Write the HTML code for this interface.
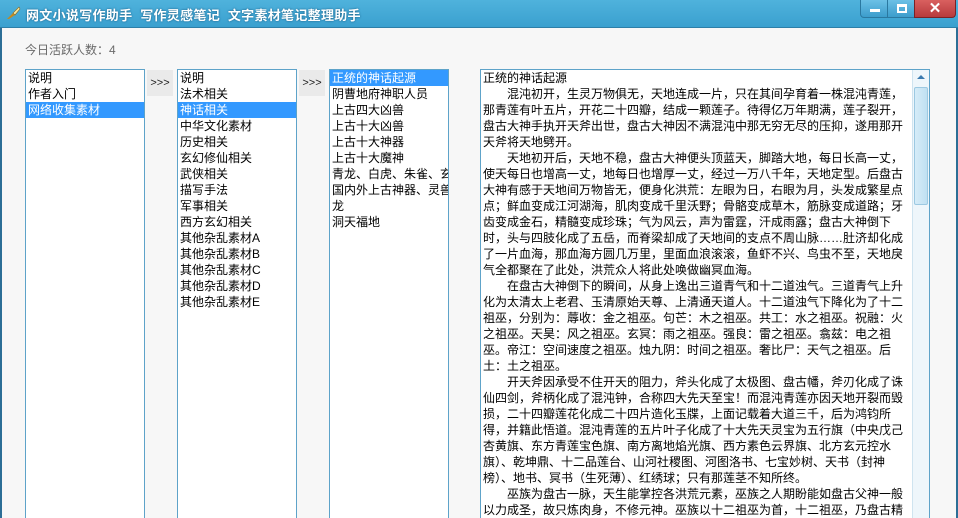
<!DOCTYPE html>
<html style="width:958px;height:518px;overflow:hidden"><head><meta charset="utf-8"><style>
*{margin:0;padding:0;box-sizing:border-box}
body{width:958px;height:518px;overflow:hidden;position:relative;background:#f7f7f7;font-family:"Liberation Sans","Noto Sans CJK SC",sans-serif;font-size:12px;color:#000}
#tb{position:absolute;left:0;top:0;width:958px;height:28px;background:linear-gradient(#4fb2dc,#3aa0cf);border-bottom:1px solid #2d7fa8}
#tb .t{position:absolute;left:26px;top:5px;color:#fff;font-size:13px;font-weight:bold;letter-spacing:0.3px;text-shadow:0 0 2px #1a5a80}
.ico{position:absolute;left:6px;top:6px;width:15px;height:14px}
.btn{position:absolute;top:0;height:18px;border:1px solid #2a78a0;border-top:none}
#bl{position:absolute;left:0;top:28px;width:2px;height:490px;background:#2c6e96}
#br{position:absolute;right:0;top:28px;width:2px;height:490px;background:#2c6e96}
.lb{position:absolute;top:69px;height:460px;background:#fff;border:1px solid #5ea3c9;line-height:16px;padding-top:0}
.lb div{padding-left:2px;white-space:nowrap;overflow:hidden;height:16px}
.sel{background:#3399ff;color:#fff}
.ar{position:absolute;top:70px;width:26px;height:26px;background:#eaeaea;font-size:11px;line-height:26px;text-align:center;color:#222}
#tx{position:absolute;left:480px;top:69px;width:450px;height:460px;background:#fff;border:1px solid #5ea3c9;line-height:16px;padding:0 0 0 2px}
#tx div{white-space:nowrap;height:16px}
#sb{position:absolute;left:912px;top:70px;width:17px;height:448px;background:#eef6fb;border-left:1px solid #cfe4f0}
#sb .th{position:absolute;left:1px;top:17px;width:14px;height:118px;background:linear-gradient(90deg,#d6ecf8,#bfe0f2);border:1px solid #9cc9e2;border-radius:2px}
</style></head><body>
<div id="tb">
<svg class="ico" viewBox="0 0 15 14"><path d="M1 13 L7 7 L9 9 L3 13 Z" fill="#c08a20"/><path d="M7 7 L13 1 L14 3 L9 9Z" fill="#f5e6a0" stroke="#8a6a20" stroke-width="0.6"/></svg>
<div class="t">网文小说写作助手&nbsp; 写作灵感笔记&nbsp; 文字素材笔记整理助手</div>
<div class="btn" style="left:860px;width:28px;background:linear-gradient(#6bc0e6,#3c9dcc);border-radius:0 0 0 4px"><div style="position:absolute;left:9px;top:9px;width:10px;height:3px;background:#fff"></div></div>
<div class="btn" style="left:887px;width:28px;background:linear-gradient(#6bc0e6,#3c9dcc)"><div style="position:absolute;left:9px;top:4px;width:10px;height:9px;border:2px solid #fff;border-top-width:3px"></div></div>
<div class="btn" style="left:914px;width:42px;background:linear-gradient(#d9605f,#b73a3c);border-color:#7a2226;border-radius:0 0 4px 0;color:#fff;font-weight:bold;font-size:15px;text-align:center;line-height:17px">✕</div>
</div>
<div id="bl"></div><div id="br"></div>
<div style="position:absolute;left:25px;top:41px;color:#6a6a6a;font-size:12px">今日活跃人数：4</div>
<div class="lb" style="left:25px;width:120px"><div>说明</div><div>作者入门</div><div class="sel">网络收集素材</div></div>
<div class="ar" style="left:147px">&gt;&gt;&gt;</div>
<div class="lb" style="left:177px;width:120px"><div>说明</div><div>法术相关</div><div class="sel">神话相关</div><div>中华文化素材</div><div>历史相关</div><div>玄幻修仙相关</div><div>武侠相关</div><div>描写手法</div><div>军事相关</div><div>西方玄幻相关</div><div>其他杂乱素材A</div><div>其他杂乱素材B</div><div>其他杂乱素材C</div><div>其他杂乱素材D</div><div>其他杂乱素材E</div></div>
<div class="ar" style="left:299px">&gt;&gt;&gt;</div>
<div class="lb" style="left:329px;width:120px"><div class="sel">正统的神话起源</div><div>阴曹地府神职人员</div><div>上古四大凶兽</div><div>上古十大凶兽</div><div>上古十大神器</div><div>上古十大魔神</div><div>青龙、白虎、朱雀、玄武</div><div>国内外上古神器、灵兽</div><div>龙</div><div>洞天福地</div></div>
<div id="tx">
<div>正统的神话起源</div>
<div>　　混沌初开，生灵万物俱无，天地连成一片，只在其间孕育着一株混沌青莲，</div>
<div>那青莲有叶五片，开花二十四瓣，结成一颗莲子。待得亿万年期满，莲子裂开，</div>
<div>盘古大神手执开天斧出世，盘古大神因不满混沌中那无穷无尽的压抑，遂用那开</div>
<div>天斧将天地劈开。</div>
<div>　　天地初开后，天地不稳，盘古大神便头顶蓝天，脚踏大地，每日长高一丈，</div>
<div>使天每日也增高一丈，地每日也增厚一丈，经过一万八千年，天地定型。后盘古</div>
<div>大神有感于天地间万物皆无，便身化洪荒：左眼为日，右眼为月，头发成繁星点</div>
<div>点；鲜血变成江河湖海，肌肉变成千里沃野；骨骼变成草木，筋脉变成道路；牙</div>
<div>齿变成金石，精髓变成珍珠；气为风云，声为雷霆，汗成雨露；盘古大神倒下</div>
<div>时，头与四肢化成了五岳，而脊梁却成了天地间的支点不周山脉……肚济却化成</div>
<div>了一片血海，那血海方圆几万里，里面血浪滚滚，鱼虾不兴、鸟虫不至，天地戾</div>
<div>气全都聚在了此处，洪荒众人将此处唤做幽冥血海。</div>
<div>　　在盘古大神倒下的瞬间，从身上逸出三道青气和十二道浊气。三道青气上升</div>
<div>化为太清太上老君、玉清原始天尊、上清通天道人。十二道浊气下降化为了十二</div>
<div>祖巫，分别为：蓐收：金之祖巫。句芒：木之祖巫。共工：水之祖巫。祝融：火</div>
<div>之祖巫。天昊：风之祖巫。玄冥：雨之祖巫。强良：雷之祖巫。翕兹：电之祖</div>
<div>巫。帝江：空间速度之祖巫。烛九阴：时间之祖巫。奢比尸：天气之祖巫。后</div>
<div>土：土之祖巫。</div>
<div>　　开天斧因承受不住开天的阻力，斧头化成了太极图、盘古幡，斧刃化成了诛</div>
<div>仙四剑，斧柄化成了混沌钟，合称四大先天至宝！而混沌青莲亦因天地开裂而毁</div>
<div>损，二十四瓣莲花化成二十四片造化玉牒，上面记载着大道三千，后为鸿钧所</div>
<div>得，并籍此悟道。混沌青莲的五片叶子化成了十大先天灵宝为五行旗（中央戊己</div>
<div>杏黄旗、东方青莲宝色旗、南方离地焰光旗、西方素色云界旗、北方玄元控水</div>
<div>旗）、乾坤鼎、十二品莲台、山河社稷图、河图洛书、七宝妙树、天书（封神</div>
<div>榜）、地书、冥书（生死薄）、红绣球；只有那莲茎不知所终。</div>
<div>　　巫族为盘古一脉，天生能掌控各洪荒元素，巫族之人期盼能如盘古父神一般</div>
<div>以力成圣，故只炼肉身，不修元神。巫族以十二祖巫为首，十二祖巫，乃盘古精</div>
</div>
<div id="sb"><div style="position:absolute;left:4px;top:5px;width:0;height:0;border-left:4px solid transparent;border-right:4px solid transparent;border-bottom:4px solid #3a7ab0"></div><div class="th"></div></div>
</body></html>
